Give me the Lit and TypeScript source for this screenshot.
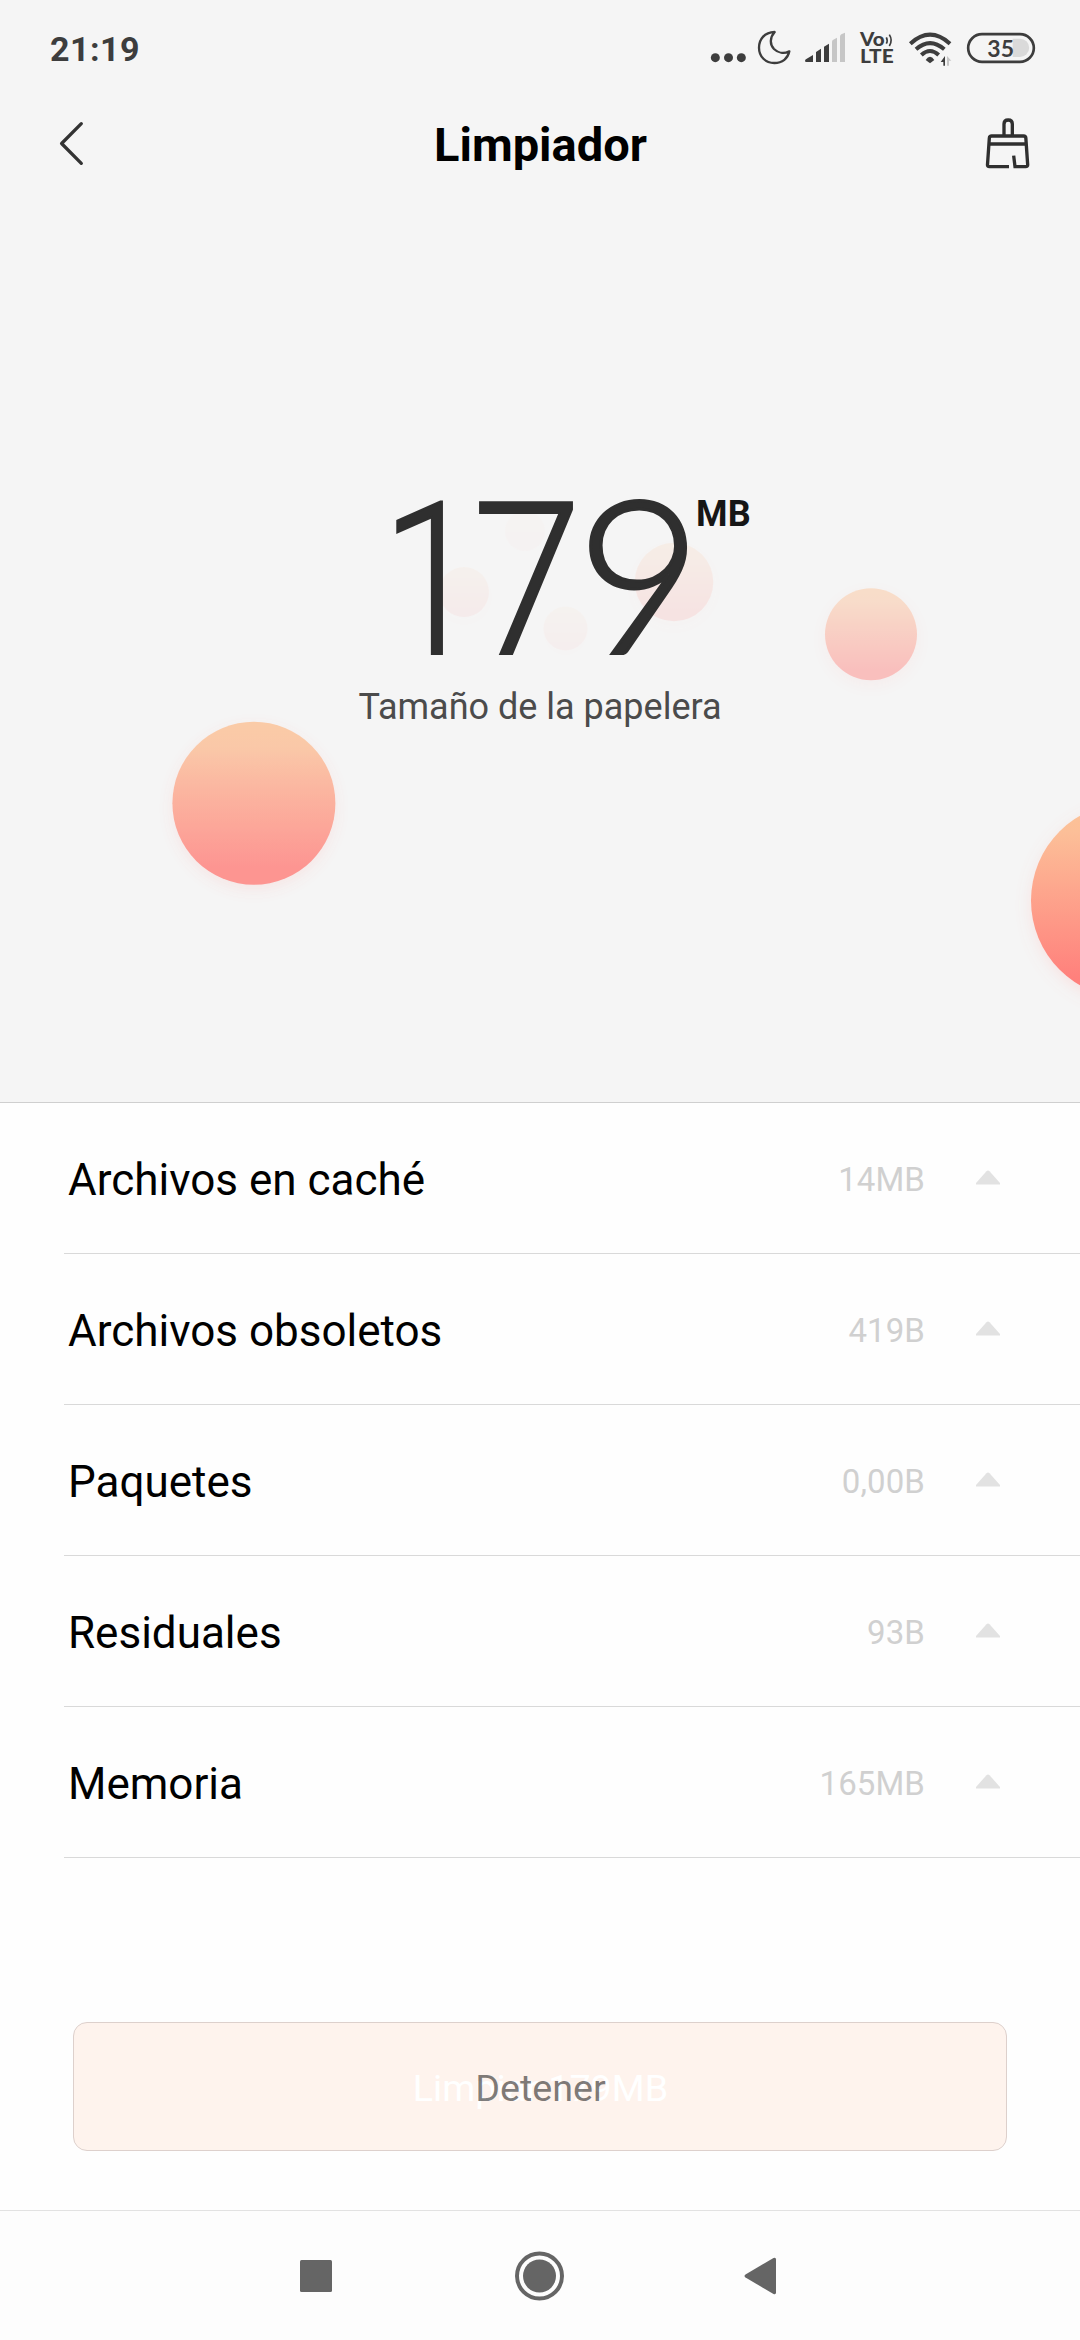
import { LitElement, html, css, svg } from "lit";
import { customElement, property } from "lit/decorators.js";

@customElement("status-bar")
class StatusBar extends LitElement {
  static styles = css`
    :host { display: flex; justify-content: space-between; height: 76px; padding: 0 40px 0 50px; box-sizing: border-box; color: #3d3d3d; }
    .time { font-weight: 700; font-size: 34px; line-height: 99px; letter-spacing: .5px; }
    .icons { display: block; width: 340px; height: 56px; margin-top: 20px; }
    .lte { font-family: Lato, sans-serif; font-weight: 900; }
    .pct { font-family: Lato, sans-serif; font-weight: 700; }
  `;
  render() {
    return html`
      <span class="time">21:19</span>
      <svg class="icons" viewBox="30 60 1020 168" fill="#3d3d3d">
        <circle cx="76" cy="173" r="13.5" /><circle cx="115.500" cy="173" r="13.5" /><circle cx="154" cy="173" r="13.5" />
        <path d="M254 96C223 97 207 118 207 143C207 170 227 189 253 189C277 189 294 175 298 154C282 162 264 159 252 147C239 133 239 113 254 96Z" fill="none" stroke="#3d3d3d" stroke-width="7" stroke-linejoin="round" />
        <path d="M345 183Q345 179 349 177L369 165V186H349Q345 186 345 183Z" />
        <path d="M378 156L393 146V186H378ZM402 140L417 131V186H402Z" />
        <path d="M426 125Q426 121 430 119L441 113V186H426ZM450 110Q450 105 454 103L465 98V186H450Z" fill="#c6c6c6" />
        <text class="lte" x="510" y="137" font-size="54" textLength="74" lengthAdjust="spacingAndGlyphs">Vo</text>
        <path d="M589 112Q594 122 589 131M598 104Q609 121 598 138" fill="none" stroke="#3d3d3d" stroke-width="5" />
        <text class="lte" x="510" y="189" font-size="54" textLength="101" lengthAdjust="spacingAndGlyphs">LTE</text>
        <g fill="none" stroke="#3d3d3d" stroke-width="12">
          <path d="M661 131Q720 77 780 131M678 148Q720 111 763 148M694 165Q720 141 746 165" />
        </g>
        <path d="M707 180Q720 161 733 180L720 190Z" />
        <path d="M752 186L765 168V197H760V186Z" />
        <path d="M771 168L784 182H777V197H771Z" fill="#c6c6c6" />
        <path d="M968 116H990A27 27 0 0 1 990 171H968Z" fill="#dadada" />
        <rect x="834.500" y="102.500" width="197" height="83" rx="41.500" fill="none" stroke="#3d3d3d" stroke-width="8" />
        <text class="pct" x="892" y="170" font-size="69" textLength="80" lengthAdjust="spacingAndGlyphs">35</text>
      </svg>
    `;
  }
}

@customElement("title-bar")
class TitleBar extends LitElement {
  static styles = css`
    :host { display: flex; align-items: center; justify-content: space-between; height: 136px; padding: 0 45px 0 52px; box-sizing: border-box; }
    .back { width: 48px; height: 60px; }
    .brush { width: 55px; height: 60px; }
    .title { margin: 1px 0 0 1px; font-size: 47px; line-height: 64px; font-weight: 700; color: #000; }
  `;
  render() {
    return html`
      <svg class="back" viewBox="52 114 48 60"><path d="M81.300 123.700L61.600 143.500L81.300 163.300" fill="none" stroke="#333" stroke-width="3.300" stroke-linecap="round" stroke-linejoin="round" /></svg>
      <h1 class="title">Limpiador</h1>
      <svg class="brush" viewBox="870 340 165 180" fill="none" stroke="#2f2f2f" stroke-width="10">
        <path d="M942 405V370Q942 358 954.500 358Q967 358 967 370V405" />
        <path d="M957 498H898Q892 498 892.500 492L898 412Q898.500 406 905 406H1001Q1007 406 1007.500 412L1013 492Q1013.500 498 1007 498H975L971 465" />
        <path d="M898 430H1008" />
      </svg>
    `;
  }
}

@customElement("trash-hero")
class TrashHero extends LitElement {
  static styles = css`
    :host { display: flex; flex-direction: column; align-items: center; position: relative; height: 890px; overflow: hidden; border-bottom: 1px solid #cfcfcf; }
    .figure { position: relative; display: flex; width: 378px; height: 200px; margin: 266px 0 0 54px; }
    .digits { flex: none; width: 312px; height: 200px; fill: #2f2f2f; stroke: #2f2f2f; stroke-width: 2px; overflow: visible; }
    .slim { font: 300 213px Roboto, sans-serif; }
    .nine { font: 300 214px Lato, sans-serif; stroke-width: 3px; }
    .unit { color: #161616; font-weight: 700; font-size: 36px; line-height: 42px; margin: 15px 0 0 6px; letter-spacing: .3px; }
    .caption { position: relative; font-size: 36px; line-height: 44px; margin-top: 7px; color: #4b4b4b; }
    .bubbles { position: absolute; inset: 0; width: 1080px; height: 890px; }
  `;
  render() {
    return html`
      <svg class="bubbles" viewBox="0 212 1080 890">
        <defs>
          <linearGradient id="warm" x1="0" y1="0" x2="0" y2="1">
            <stop offset="0" stop-color="#fcc296" /><stop offset=".15" stop-color="#fcbf98" /><stop offset=".9" stop-color="#ff807c" /><stop offset="1" stop-color="#ff807c" />
          </linearGradient>
          <filter id="halo" x="-30%" y="-30%" width="160%" height="160%"><feDropShadow dx="0" dy="5" stdDeviation="8" flood-color="#ff8078" flood-opacity=".16" /></filter>
        </defs>
        ${[
          [1129, 900.5, 98, 1], [253.9, 803.3, 81.5, 0.82], [871, 634.3, 46, 0.46],
          [674, 582, 39.3, 0.15], [464, 592, 25, 0.08], [565.500, 628.5, 22, 0.05], [525, 531, 20, 0.02],
        ].map(([x, y, r, o]) => svg`<circle cx=${x} cy=${y} r=${r} opacity=${o} fill="url(#warm)" filter="url(#halo)" />`)}
      </svg>
      <div class="figure">
        <svg class="digits" viewBox="378 478 312 200">
          <text class="slim" transform="translate(381.500 653.700) scale(.84 1)">1</text>
          <text class="slim" transform="translate(472.500 653.700) scale(.925 1)">7</text>
          <text class="nine" transform="translate(576.500 653.200) scale(1.01 1)">9</text>
        </svg>
        <span class="unit">MB</span>
      </div>
      <div class="caption">Tamaño de la papelera</div>
    `;
  }
}

@customElement("junk-row")
class JunkRow extends LitElement {
  @property() label = "";
  @property() size = "";
  static styles = css`
    :host { display: flex; align-items: center; height: 151px; margin-left: 64px; padding: 4px 80px 0 4px; box-sizing: border-box; border-bottom: 1px solid #d9d9d9; }
    .label { flex: 1; font-size: 44px; line-height: 60px; color: #000; }
    .size { font-size: 33px; line-height: 60px; color: #d0d0d0; letter-spacing: .1px; }
    .arrow { width: 24px; height: 15px; margin: 0 0 5px 51px; }
  `;
  render() {
    return html`
      <span class="label">${this.label}</span>
      <span class="size">${this.size}</span>
      <svg class="arrow" viewBox="0 0 24 15"><path d="M0 14.500V13L10.500 1.200Q12 0 13.500 1.200L24 13V14.500Z" fill="#e2e2e2" /></svg>
    `;
  }
}

@customElement("nav-bar")
class NavBar extends LitElement {
  static styles = css`
    :host { display: flex; justify-content: center; gap: 172px; align-items: center; height: 130px; box-sizing: border-box; border-top: 1px solid #e2e2e2; background: #fdfdfd; fill: #656565; }
    .key { width: 50px; height: 50px; }
  `;
  render() {
    return html`
      <svg class="key" viewBox="0 0 50 50"><rect x="7" y="9" width="32" height="32" rx="1.500" /></svg>
      <svg class="key" viewBox="0 0 50 50"><circle cx="24.500" cy="25" r="22.500" fill="none" stroke="#656565" stroke-width="4" /><circle cx="24.500" cy="25" r="16.500" /></svg>
      <svg class="key" viewBox="0 0 50 50"><path d="M8.500 23.500L36.500 7Q39 6 39 8.500V41.500Q39 44 36.500 43L8.500 26.500Q6.500 25 8.500 23.500Z" /></svg>
    `;
  }
}

@customElement("app-root")
class AppRoot extends LitElement {
  static styles = css`
    :host { display: flex; flex-direction: column; width: 1080px; height: 2340px; overflow: hidden; font-family: Roboto, sans-serif; background: #fefefe; }
    .top { background: #f5f5f5; }
    .list { flex: 1; }
    .button { display: grid; place-items: center; box-sizing: border-box; height: 129px; margin: 0 73px 59px; border: 1px solid #ddd0cc; border-radius: 14px; background: #fef3ed; font-size: 37.700px; line-height: 50px; padding-top: 2px; padding-left: 1px; }
    .clean, .stop { grid-area: 1 / 1; }
    .clean { color: #fff; }
    .stop { color: rgba(0, 0, 0, .52); }
  `;
  private rows = [
    ["Archivos en caché", "14MB"],
    ["Archivos obsoletos", "419B"],
    ["Paquetes", "0,00B"],
    ["Residuales", "93B"],
    ["Memoria", "165MB"],
  ];
  render() {
    return html`
      <div class="top">
        <status-bar></status-bar>
        <title-bar></title-bar>
        <trash-hero></trash-hero>
      </div>
      <div class="list">${this.rows.map(([l, s]) => html`<junk-row .label=${l} .size=${s}></junk-row>`)}</div>
      <div class="button"><span class="clean">Limpiar 179MB</span><span class="stop">Detener</span></div>
      <nav-bar></nav-bar>
    `;
  }
}
